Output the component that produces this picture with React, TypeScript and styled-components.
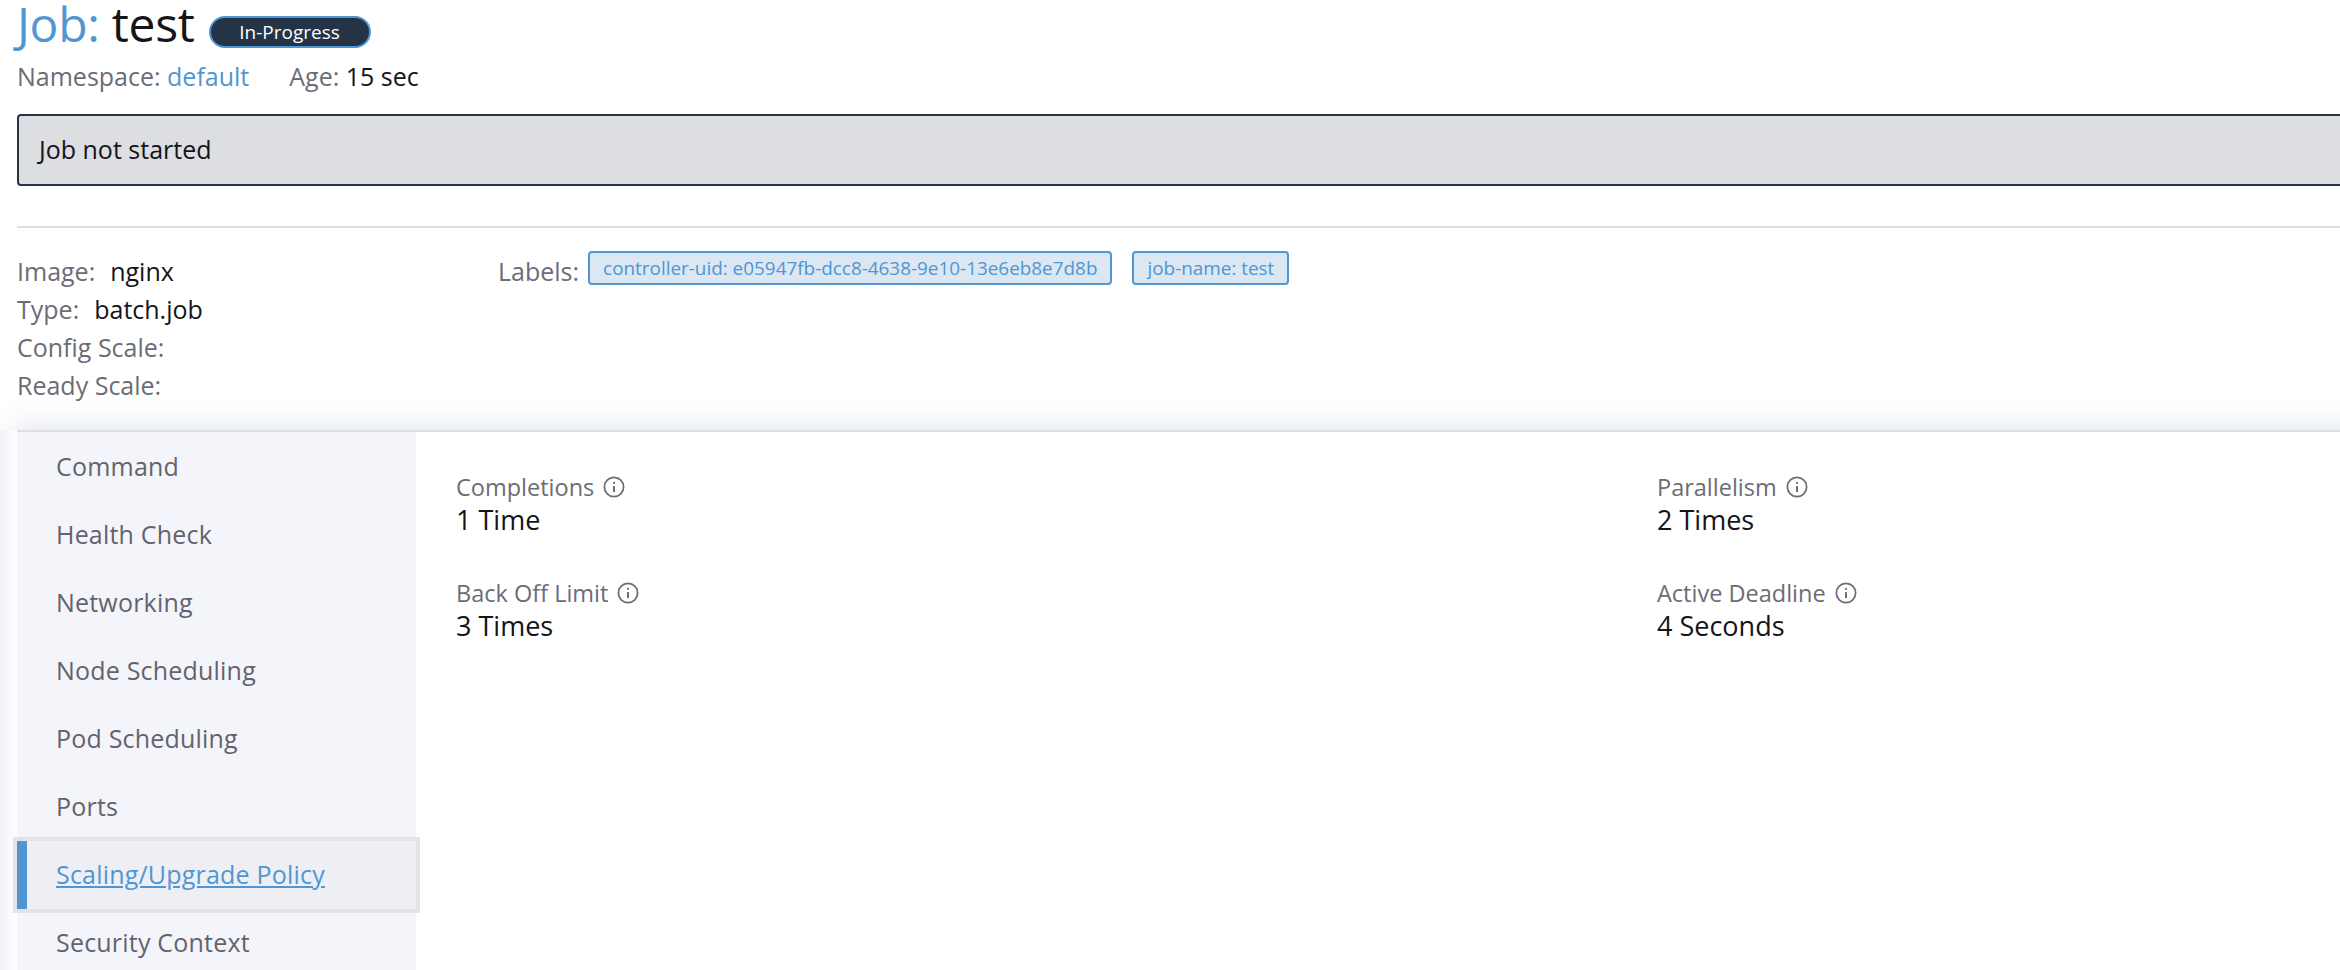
import React from 'react'
import styled, { createGlobalStyle } from 'styled-components'

const colors = {
  link: '#5096d2',
  label: '#6c6c76',
  text: '#141419',
  dark: '#243446',
  line: '#dcdfe7',
  side: '#f4f5fa',
}

const GlobalStyle = createGlobalStyle`
  html, body {
    margin: 0;
    padding: 0;
    width: 2340px;
    height: 970px;
    overflow: hidden;
    background: #fff;
    font-family: 'Open Sans', 'Noto Sans', sans-serif;
    color: ${colors.text};
  }
`

const InfoIcon = () => (
  <InfoSvg viewBox='0 0 24 24' fill='none' stroke='currentColor'>
    <circle cx='12' cy='12' r='10.5' strokeWidth='1.9' />
    <circle cx='12' cy='7.6' r='1.2' fill='currentColor' stroke='none' />
    <path d='M12 11v6.5' strokeWidth='2.2' />
  </InfoSvg>
)

const sideItems = [
  'Command',
  'Health Check',
  'Networking',
  'Node Scheduling',
  'Pod Scheduling',
  'Ports',
  'Scaling/Upgrade Policy',
  'Security Context',
]

const fields = [
  { label: 'Completions', value: '1 Time' },
  { label: 'Parallelism', value: '2 Times' },
  { label: 'Back Off Limit', value: '3 Times' },
  { label: 'Active Deadline', value: '4 Seconds' },
]

export default function App() {
  return (
    <Page>
      <GlobalStyle />
      <Masthead>
        <TitleRow>
          <Title>
            <TitleKey>Job:</TitleKey> test
          </Title>
          <Badge>In-Progress</Badge>
        </TitleRow>
        <MetaRow>
          <span>
            Namespace: <MetaLink>default</MetaLink>
          </span>
          <span>
            Age: <MetaValue>15 sec</MetaValue>
          </span>
        </MetaRow>
        <Banner>Job not started</Banner>
        <Divider />
        <Details>
          <DetailsColumn>
            <DetailRow>
              Image:<DetailValue>nginx</DetailValue>
            </DetailRow>
            <DetailRow>
              Type:<DetailValue>batch.job</DetailValue>
            </DetailRow>
            <DetailRow>Config Scale:</DetailRow>
            <DetailRow>Ready Scale:</DetailRow>
          </DetailsColumn>
          <LabelsRow>
            <LabelsTitle>Labels:</LabelsTitle>
            <Tag>controller-uid: e05947fb-dcc8-4638-9e10-13e6eb8e7d8b</Tag>
            <Tag>job-name: test</Tag>
          </LabelsRow>
        </Details>
      </Masthead>
      <Tabs>
        <TabsBody>
          <Sidebar>
            {sideItems.map((item) => (
              <SideItem key={item} $active={item === 'Scaling/Upgrade Policy'}>
                {item}
              </SideItem>
            ))}
          </Sidebar>
          <Content>
            {fields.map((field) => (
              <Field key={field.label}>
                <FieldLabel>
                  {field.label}
                  <InfoIcon />
                </FieldLabel>
                <FieldValue>{field.value}</FieldValue>
              </Field>
            ))}
          </Content>
        </TabsBody>
      </Tabs>
    </Page>
  )
}

const Page = styled.div`
  width: 2340px;
  height: 970px;
  overflow: hidden;
  padding-left: 17px;
  box-sizing: border-box;
`
const Masthead = styled.div`
  width: 2400px;
`
const TitleRow = styled.div`
  display: flex;
  align-items: flex-start;
  gap: 14px;
  height: 56px;
`
const Title = styled.h1`
  margin: 0;
  font-size: 48px;
  font-weight: 400;
  line-height: 48px;
  letter-spacing: -0.3px;
`
const TitleKey = styled.span`
  color: ${colors.link};
`
const Badge = styled.span`
  display: flex;
  align-items: center;
  justify-content: center;
  width: 162px;
  height: 32px;
  margin-top: 16px;
  box-sizing: border-box;
  border: 2px solid ${colors.link};
  border-radius: 16px;
  background: ${colors.dark};
  color: #fff;
  font-size: 19px;
`
const MetaRow = styled.div`
  display: flex;
  gap: 40px;
  margin-top: 2px;
  height: 36px;
  align-items: center;
  font-size: 25px;
  color: ${colors.label};
`
const MetaLink = styled.span`
  color: ${colors.link};
`
const MetaValue = styled.span`
  color: ${colors.text};
`
const Banner = styled.div`
  display: flex;
  align-items: center;
  height: 72px;
  margin-top: 20px;
  padding: 0 0 2px 20px;
  box-sizing: border-box;
  border: 2px solid ${colors.dark};
  border-radius: 4px;
  background: #dcdee2;
  font-size: 25px;
`
const Divider = styled.div`
  height: 2px;
  margin-top: 40px;
  background: ${colors.line};
`
const Details = styled.div`
  display: flex;
  height: 202px;
  padding-top: 21px;
  box-sizing: border-box;
`
const DetailsColumn = styled.div`
  width: 481px;
  padding-top: 3px;
`
const DetailRow = styled.div`
  display: flex;
  gap: 15px;
  height: 38px;
  line-height: 38px;
  font-size: 25px;
  color: ${colors.label};
`
const DetailValue = styled.span`
  color: ${colors.text};
`
const LabelsRow = styled.div`
  display: flex;
  align-items: flex-start;
  gap: 20px;
  font-size: 25px;
  color: ${colors.label};
  line-height: 38px;
`
const LabelsTitle = styled.span`
  margin-right: -11px;
  padding-top: 3px;
`
const Tag = styled.span`
  display: flex;
  align-items: center;
  height: 34px;
  margin-top: 2px;
  padding: 0 13px;
  box-sizing: border-box;
  border: 2px solid ${colors.link};
  border-radius: 4px;
  background: #dbe7f3;
  color: ${colors.link};
  font-size: 18.9px;
`
const Tabs = styled.div`
  width: 2400px;
  height: 540px;
  margin-left: -17px;
  padding-left: 17px;
  box-shadow: 0 -18px 24px -12px rgba(220, 223, 231, 0.7);
  background: linear-gradient(to right, #f2f3f7, #fff 17px);
  position: relative;
`
const TabsBody = styled.div`
  display: flex;
  height: 100%;
  background: #fff;
  border-top: 2px solid ${colors.line};
`
const Sidebar = styled.div`
  width: 399px;
  flex-shrink: 0;
  background: ${colors.side};
  padding-top: 1px;
`
const SideItem = styled.div<{ $active: boolean }>`
  display: flex;
  align-items: center;
  height: 68px;
  padding: 0 0 2px 39px;
  box-sizing: border-box;
  font-size: 25px;
  letter-spacing: 0.2px;
  color: ${({ $active }) => ($active ? colors.link : '#63636d')};
  text-decoration: ${({ $active }) => ($active ? 'underline' : 'none')};
  ${({ $active }) =>
    $active &&
    `
    background: #eeeff4;
    border-left: 10px solid ${colors.link};
    padding-left: 29px;
    outline: 4px solid #e3e4ea;
  `}
`
const Content = styled.div`
  display: grid;
  grid-template-columns: 1201px 1fr;
  grid-auto-rows: 106px;
  padding: 38px 0 0 40px;
`
const Field = styled.div`
  display: flex;
  flex-direction: column;
`
const FieldLabel = styled.div`
  display: flex;
  align-items: center;
  gap: 9px;
  height: 34px;
  font-size: 23.5px;
  color: ${colors.label};
`
const FieldValue = styled.div`
  font-size: 27px;
  line-height: 32px;
  color: ${colors.text};
`
const InfoSvg = styled.svg`
  width: 22px;
  height: 22px;
`
